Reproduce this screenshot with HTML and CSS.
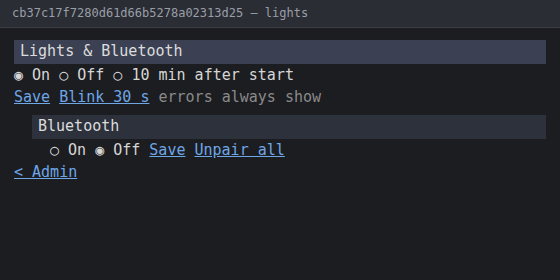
FILE: index.html
```html
<!DOCTYPE html>
<html>
<head>
<meta charset="utf-8">
<link rel="stylesheet" href="styles.css">
</head>
<body>
<div class="titlebar">cb37c17f7280d61d66b5278a02313d25 — lights</div>
<main class="content">
  <h2 class="head head-main">Lights &amp; Bluetooth</h2>
  <div class="line">◉ On ○ Off ○ 10 min after start</div>
  <div class="line"><a href="#">Save</a> <a href="#">Blink 30 s</a> <span class="muted">errors always show</span></div>
  <section class="sub">
    <h3 class="head head-sub">Bluetooth</h3>
    <div class="line sub-line">○ On ◉ Off <a href="#">Save</a> <a href="#">Unpair all</a></div>
  </section>
  <div class="line"><a href="#">&lt; Admin</a></div>
</main>
</body>
</html>
```
FILE: styles.css
```css
html, body {
  margin: 0;
  padding: 0;
  background: #1c1d21;
  font-family: "DejaVu Sans Mono", monospace;
  color: #d6d6d6;
}
.titlebar {
  height: 27px;
  line-height: 27px;
  padding-left: 12px;
  font-size: 12px;
  color: #9a9ea8;
  background: #2a2d34;
  border-bottom: 1px solid #3a3d45;
}
.content {
  padding: 12px 14px;
  font-size: 15px;
}
.head {
  margin: 0;
  font-size: 15px;
  font-weight: normal;
  height: 24px;
  line-height: 22px;
  padding: 0 6px;
  box-sizing: border-box;
  color: #dcdcdc;
}
.head-main {
  background: #3b4152;
}
.head-sub {
  background: #2c313c;
}
.line {
  height: 22px;
  line-height: 22px;
  white-space: pre;
}
.sub {
  margin: 7px 0 0 18px;
}
.sub-line {
  padding-left: 18px;
}
a {
  color: #6ea6e6;
  text-decoration: underline;
}
.muted {
  color: #8a8a8a;
}
```
